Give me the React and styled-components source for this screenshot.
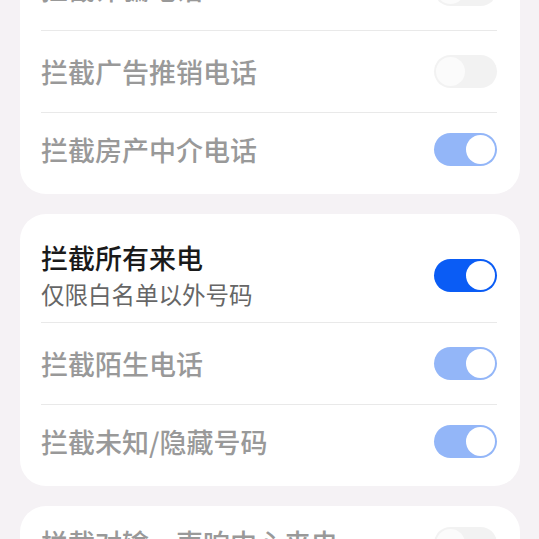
import React from "react";
import styled, { createGlobalStyle } from "styled-components";

const Global = createGlobalStyle`
  html, body { margin: 0; padding: 0; background: #f5f2f5; }
  body { font-family: "Noto Sans CJK SC", "Noto Sans", sans-serif; overflow: hidden; }
`;

const Page = styled.div`
  display: flex;
  flex-direction: column;
  gap: 20px;
  padding: 0 19px 0 20px;
  margin-top: -52px;
`;

const Card = styled.section`
  background: #ffffff;
  border-radius: 26px;
  padding: 0 23px 8px 21px;
  display: flex;
  flex-direction: column;
`;

const Row = styled.div`
  display: flex;
  align-items: center;
  justify-content: space-between;
  box-sizing: border-box;
  height: ${(p) => (p.$tall ? "108px" : "82px")};
  padding: ${(p) => (p.$tall ? "27px 0 13px" : "0")};
  & + & { border-top: 1px solid #e9e9e9; }
  &:last-child { height: 74px; }
`;

const TextCol = styled.div`
  display: flex;
  flex-direction: column;
`;

const Title = styled.div`
  font-size: 27px;
  font-weight: 500;
  line-height: 34px;
  color: ${(p) => (p.$disabled ? "#999999" : "#1a1a1a")};
`;

const Sub = styled.div`
  font-size: 23.5px;
  line-height: 30px;
  margin-top: 4px;
  color: #666666;
`;

const Track = styled.div`
  position: relative;
  width: 63px;
  height: 33px;
  border-radius: 17px;
  flex: none;
  background: ${(p) =>
    p.$on ? (p.$disabled ? "#93b6f8" : "#0a5cf5") : "#f2f2f2"};
`;

const Knob = styled.div`
  position: absolute;
  top: 2px;
  ${(p) => (p.$on ? "right: 2px;" : "left: 2px;")}
  width: 29px;
  height: 29px;
  border-radius: 50%;
  background: ${(p) => (p.$on ? "#ffffff" : "#fbfbfb")};
`;

const Toggle = ({ on, disabled }) => (
  <Track $on={on} $disabled={disabled}>
    <Knob $on={on} />
  </Track>
);

const SettingRow = ({ title, sub, on, disabled }) => (
  <Row $tall={!!sub}>
    <TextCol>
      <Title $disabled={disabled}>{title}</Title>
      {sub && <Sub>{sub}</Sub>}
    </TextCol>
    <Toggle on={on} disabled={disabled} />
  </Row>
);

export default function App() {
  return (
    <>
      <Global />
      <Page>
        <Card>
          <SettingRow title="拦截诈骗电话" on={false} disabled />
          <SettingRow title="拦截广告推销电话" on={false} disabled />
          <SettingRow title="拦截房产中介电话" on disabled />
        </Card>
        <Card>
          <SettingRow title="拦截所有来电" sub="仅限白名单以外号码" on />
          <SettingRow title="拦截陌生电话" on disabled />
          <SettingRow title="拦截未知/隐藏号码" on disabled />
        </Card>
        <Card>
          <SettingRow title="拦截对输一声响中心来电" on={false} disabled />
        </Card>
      </Page>
    </>
  );
}
